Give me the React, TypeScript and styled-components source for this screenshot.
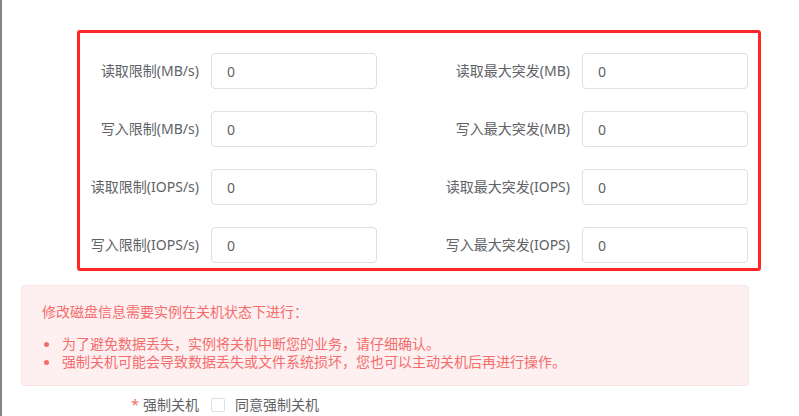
import React from 'react'
import styled, { createGlobalStyle } from 'styled-components'

const GlobalStyle = createGlobalStyle`
  html, body {
    margin: 0;
    padding: 0;
    background: #ffffff;
  }

  body {
    font-family: 'Noto Sans', 'Noto Sans CJK SC', sans-serif;
    font-size: 14px;
    color: #606266;
  }
`

const Page = styled.div`
  box-sizing: border-box;
  width: 799px;
  height: 416px;
  overflow: hidden;
  border-left: 2px solid #858585;
  padding-top: 30px;
`

const Highlight = styled.section`
  box-sizing: border-box;
  width: 684px;
  height: 241px;
  margin-left: 75px;
  border: 3px solid #ff2626;
  border-radius: 3px;
  padding: 20px 10px 0 0;
  display: grid;
  grid-template-columns: 297px 371px;
  row-gap: 22px;
  align-content: start;
`

const FormItem = styled.div`
  display: flex;
  align-items: center;
  height: 36px;
`

const Label = styled.label<{ $width: number }>`
  box-sizing: border-box;
  width: ${(p) => p.$width}px;
  padding-right: 12px;
  text-align: right;
  line-height: 20px;
  color: #606266;
  white-space: nowrap;
`

const Input = styled.input`
  box-sizing: border-box;
  width: 166px;
  height: 36px;
  padding: 0 15px;
  border: 1px solid #dcdfe6;
  border-radius: 4px;
  font-family: inherit;
  font-size: 14px;
  color: #606266;
  background: #ffffff;
  outline: none;
`

const Alert = styled.div`
  box-sizing: border-box;
  width: 728px;
  margin: 14px 0 0 19px;
  padding: 16px 20px 14px;
  background: #fef0f0;
  border: 1px solid #fde2e2;
  border-radius: 4px;
  color: #f56c6c;
`

const AlertTitle = styled.div`
  line-height: 20px;
`

const AlertList = styled.ul`
  list-style: none;
  margin: 13px 0 0;
  padding: 0;
`

const AlertItem = styled.li`
  display: flex;
  align-items: center;
  line-height: 18px;

  &::before {
    content: '';
    flex: none;
    width: 5px;
    height: 5px;
    margin: 0 13px 0 2px;
    border-radius: 50%;
    background: #f56c6c;
  }
`

const CheckRow = styled.div`
  display: flex;
  align-items: center;
  margin: 9px 0 0 19px;
  line-height: 20px;
`

const Required = styled.span`
  color: #f56c6c;
  margin-right: 4px;
`

const Box = styled.span`
  box-sizing: border-box;
  width: 14px;
  height: 14px;
  border: 1px solid #dcdfe6;
  border-radius: 2px;
  background: #ffffff;
  margin-right: 10px;
`

const CheckText = styled.span`
  color: #606266;
`

const fields = [
  ['读取限制(MB/s)', '读取最大突发(MB)'],
  ['写入限制(MB/s)', '写入最大突发(MB)'],
  ['读取限制(IOPS/s)', '读取最大突发(IOPS)'],
  ['写入限制(IOPS/s)', '写入最大突发(IOPS)'],
]

export default function App() {
  return (
    <Page>
      <GlobalStyle />
      <Highlight>
        {fields.map(([left, right]) => (
          <React.Fragment key={left}>
            <FormItem>
              <Label $width={131}>{left}</Label>
              <Input defaultValue="0" />
            </FormItem>
            <FormItem>
              <Label $width={205}>{right}</Label>
              <Input defaultValue="0" />
            </FormItem>
          </React.Fragment>
        ))}
      </Highlight>

      <Alert>
        <AlertTitle>修改磁盘信息需要实例在关机状态下进行：</AlertTitle>
        <AlertList>
          <AlertItem>为了避免数据丢失，实例将关机中断您的业务，请仔细确认。</AlertItem>
          <AlertItem>强制关机可能会导致数据丢失或文件系统损坏，您也可以主动关机后再进行操作。</AlertItem>
        </AlertList>
      </Alert>

      <CheckRow>
        <Label $width={190}>
          <Required>*</Required>强制关机
        </Label>
        <Box />
        <CheckText>同意强制关机</CheckText>
      </CheckRow>
    </Page>
  )
}
